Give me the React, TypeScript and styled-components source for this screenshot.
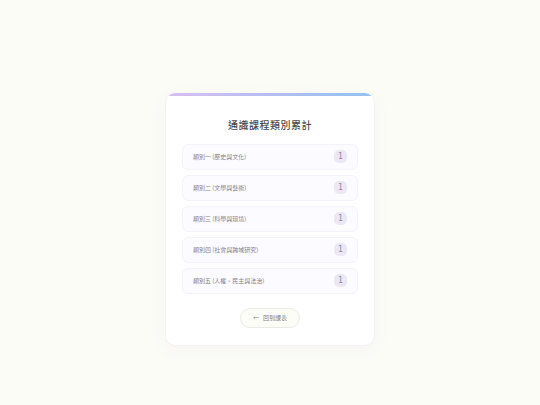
import React from "react";
import styled, { createGlobalStyle } from "styled-components";

const categories = [
  { name: "類別一 (歷史與文化)", count: 1 },
  { name: "類別二 (文學與藝術)", count: 1 },
  { name: "類別三 (科學與環境)", count: 1 },
  { name: "類別四 (社會與跨域研究)", count: 1 },
  { name: "類別五 (人權、民主與法治)", count: 1 },
];

const App = () => {
  return (
    <>
      <GlobalStyle />
      <Page>
        <Card>
          <Title>通識課程類別累計</Title>
          <List>
            {categories.map((category) => (
              <Row key={category.name}>
                <span>{category.name}</span>
                <Badge>{category.count}</Badge>
              </Row>
            ))}
          </List>
          <BackLink href="#schedule">
            <span>←</span>
            <span>回到課表</span>
          </BackLink>
        </Card>
      </Page>
    </>
  );
};

const GlobalStyle = createGlobalStyle`
  * {
    box-sizing: border-box;
  }

  body {
    margin: 0;
    background: #fcfcf7;
    color: #4a4a4a;
    font-family: "Noto Sans CJK TC", sans-serif;
  }
`;

const Page = styled.main`
  display: flex;
  justify-content: center;
  align-items: center;
  min-height: 100vh;
  padding: 33px 16px 0;
`;

const Card = styled.section`
  display: flex;
  flex-direction: column;
  align-items: center;
  width: 100%;
  max-width: 210px;
  padding: 23px 16px 17px;
  border: 1px solid #f3f2f5;
  border-top: 0;
  border-radius: 10px;
  background: linear-gradient(90deg, #d8bff0, #b5bdf2 50%, #92c3f0) top / 100% 3px no-repeat, #ffffff;
  box-shadow: 0 4px 16px rgba(120, 100, 140, 0.05);
`;

const Title = styled.h1`
  margin: 0 0 10px;
  font-size: 10px;
  line-height: 18px;
  font-weight: 500;
  letter-spacing: 0.05em;
`;

const List = styled.ul`
  display: flex;
  flex-direction: column;
  gap: 5px;
  width: 100%;
  margin: 0 0 14px;
  padding: 0;
  list-style: none;
`;

const Row = styled.li`
  display: flex;
  justify-content: space-between;
  align-items: center;
  min-height: 26px;
  padding: 0 10px;
  border: 1px solid #f5f3fa;
  border-radius: 6px;
  background: #fcfbff;
  color: #85808e;
  font-size: 6px;
  line-height: 12px;
`;

const Badge = styled.span`
  min-width: 13px;
  border-radius: 5px;
  background: #ebe8f3;
  color: #8f86aa;
  font-family: "DejaVu Sans Mono", monospace;
  font-size: 8px;
  line-height: 13px;
  text-align: center;
`;

const BackLink = styled.a`
  display: flex;
  gap: 4px;
  padding: 3px 12px;
  border: 1px solid #ebebe6;
  border-radius: 10px;
  background: #fcfdf7;
  color: #85808e;
  font-size: 6px;
  line-height: 12px;
  text-decoration: none;
`;

export default App;
